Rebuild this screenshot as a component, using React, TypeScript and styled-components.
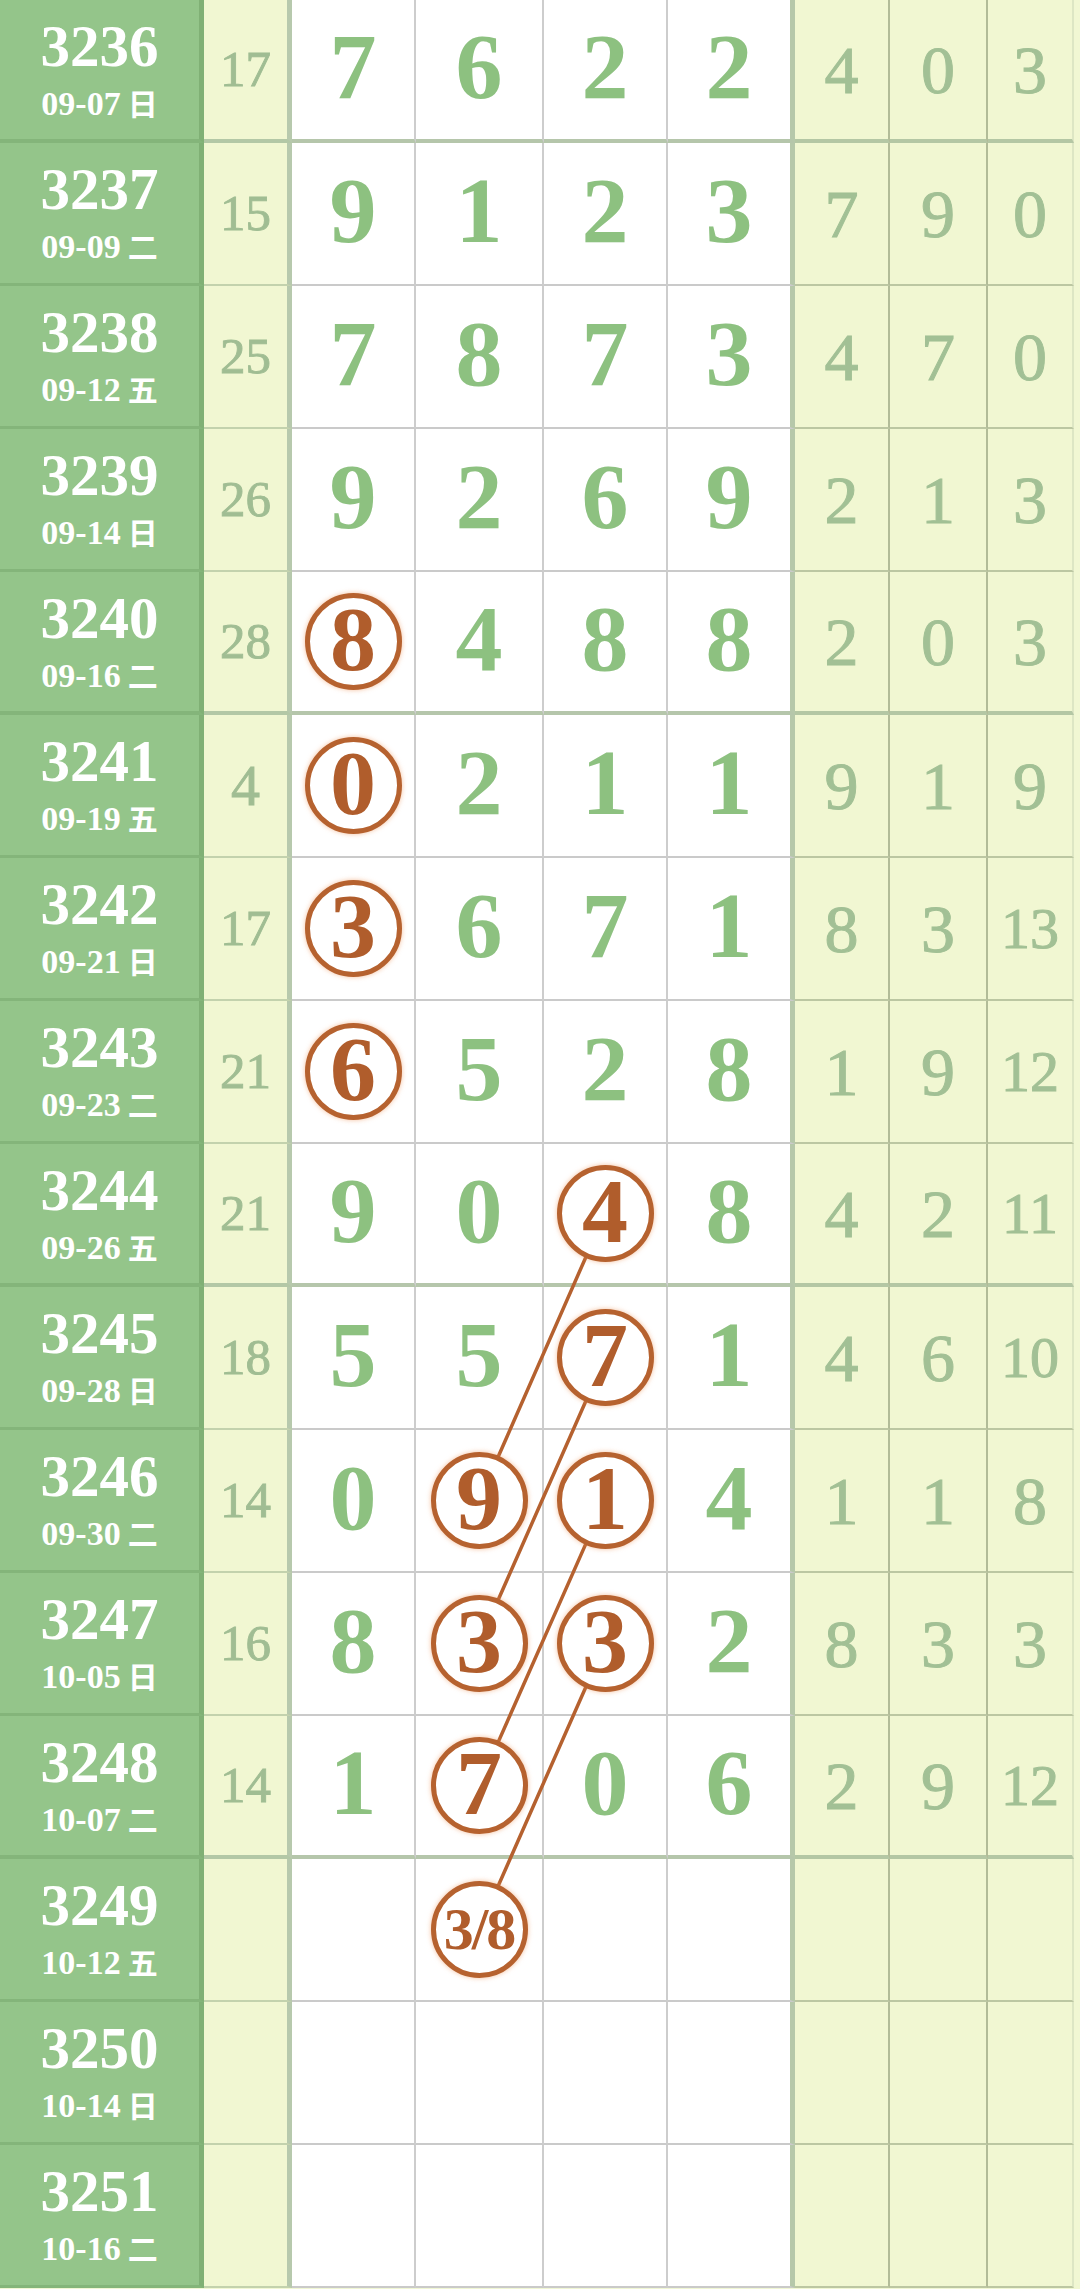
import styled, { createGlobalStyle } from 'styled-components'

type Draw = {
  issue: string
  date: string
  weekday: string
  sum?: number
  digits: string[]
  stats: number[]
  rings?: number[]
}

const ROW_H = 143
const DIGIT_START = [292, 416, 544, 668]
const DIGIT_W = [124, 128, 124, 127]
const RING_R = 48

const draws: Draw[] = [
  { issue: '3236', date: '09-07', weekday: '日', sum: 17, digits: ['7', '6', '2', '2'], stats: [4, 0, 3] },
  { issue: '3237', date: '09-09', weekday: '二', sum: 15, digits: ['9', '1', '2', '3'], stats: [7, 9, 0] },
  { issue: '3238', date: '09-12', weekday: '五', sum: 25, digits: ['7', '8', '7', '3'], stats: [4, 7, 0] },
  { issue: '3239', date: '09-14', weekday: '日', sum: 26, digits: ['9', '2', '6', '9'], stats: [2, 1, 3] },
  { issue: '3240', date: '09-16', weekday: '二', sum: 28, digits: ['8', '4', '8', '8'], stats: [2, 0, 3], rings: [0] },
  { issue: '3241', date: '09-19', weekday: '五', sum: 4, digits: ['0', '2', '1', '1'], stats: [9, 1, 9], rings: [0] },
  { issue: '3242', date: '09-21', weekday: '日', sum: 17, digits: ['3', '6', '7', '1'], stats: [8, 3, 13], rings: [0] },
  { issue: '3243', date: '09-23', weekday: '二', sum: 21, digits: ['6', '5', '2', '8'], stats: [1, 9, 12], rings: [0] },
  { issue: '3244', date: '09-26', weekday: '五', sum: 21, digits: ['9', '0', '4', '8'], stats: [4, 2, 11], rings: [2] },
  { issue: '3245', date: '09-28', weekday: '日', sum: 18, digits: ['5', '5', '7', '1'], stats: [4, 6, 10], rings: [2] },
  { issue: '3246', date: '09-30', weekday: '二', sum: 14, digits: ['0', '9', '1', '4'], stats: [1, 1, 8], rings: [1, 2] },
  { issue: '3247', date: '10-05', weekday: '日', sum: 16, digits: ['8', '3', '3', '2'], stats: [8, 3, 3], rings: [1, 2] },
  { issue: '3248', date: '10-07', weekday: '二', sum: 14, digits: ['1', '7', '0', '6'], stats: [2, 9, 12], rings: [1] },
  { issue: '3249', date: '10-12', weekday: '五', digits: ['', '3/8', '', ''], stats: [], rings: [1] },
  { issue: '3250', date: '10-14', weekday: '日', digits: ['', '', '', ''], stats: [] },
  { issue: '3251', date: '10-16', weekday: '二', digits: ['', '', '', ''], stats: [] },
]

// [row, col] -> [row, col]
const links: [number, number, number, number][] = [
  [8, 2, 10, 1],
  [9, 2, 11, 1],
  [10, 2, 12, 1],
  [11, 2, 13, 1],
]

const isGroupEnd = (i: number) => i % 4 === 0

const GlobalStyle = createGlobalStyle`
  html, body {
    margin: 0;
    padding: 0;
    background: #f1f7d3;
  }
  body {
    font-family: "Liberation Serif", "Noto Sans CJK SC", serif;
  }
`

const Table = styled.div`
  position: relative;
  width: 1080px;
`

const Row = styled.div`
  display: grid;
  grid-template-columns: 204px 88px 124px 128px 124px 127px 95px 98px 92px;
  height: ${ROW_H}px;
`

const IssueCell = styled.div<{ $end: boolean }>`
  box-sizing: border-box;
  display: flex;
  flex-direction: column;
  align-items: center;
  justify-content: center;
  gap: 11px;
  padding-bottom: 2px;
  background: #94c58a;
  border-right: 5px solid #80b075;
  border-bottom: ${({ $end }) => ($end ? '4px' : '3px')} solid #84b57a;
  color: #fff;
  font-weight: 700;
`

const IssueNo = styled.span`
  font-size: 59px;
  line-height: 1;
`

const IssueDate = styled.span`
  font-size: 34px;
  line-height: 1;
  white-space: nowrap;
`

const Weekday = styled.span`
  font-family: "Noto Sans CJK SC", sans-serif;
  font-size: 30px;
  font-weight: 700;
  margin-left: 7px;
`

const SumCell = styled.div<{ $end: boolean; $wide: boolean }>`
  box-sizing: border-box;
  display: flex;
  align-items: center;
  justify-content: center;
  background: #f1f7d2;
  border-right: 5px solid #b7c9ad;
  border-bottom: ${({ $end }) => ($end ? '4px solid #b3c8a6' : '2px solid #c3d2ad')};
  color: #a0bd93;
  -webkit-text-stroke: 0.9px #a0bd93;
  font-size: ${({ $wide }) => ($wide ? 51 : 58)}px;
  line-height: 1;
`

const DigitCell = styled.div<{ $end: boolean; $last: boolean }>`
  box-sizing: border-box;
  display: flex;
  align-items: center;
  justify-content: center;
  background: #fff;
  border-right: ${({ $last }) => ($last ? '5px solid #b6c8aa' : '2px solid #cdcdcd')};
  border-bottom: ${({ $end }) => ($end ? '4px solid #b5c6ab' : '2px solid #cacaca')};
`

const Digit = styled.span`
  color: #8dc180;
  font-size: 94px;
  font-weight: 700;
  line-height: 1;
  margin-bottom: 8px;
`

const Ring = styled.span<{ $small: boolean }>`
  position: relative;
  z-index: 2;
  box-sizing: border-box;
  width: 97px;
  height: 97px;
  display: flex;
  align-items: center;
  justify-content: center;
  padding-bottom: ${({ $small }) => ($small ? 2 : 6)}px;
  border: 5px solid #b6622f;
  border-radius: 50%;
  background: #fff;
  box-shadow: 0 0 5px rgba(238, 150, 92, 0.6);
  color: #b05d2c;
  font-size: ${({ $small }) => ($small ? 60 : 92)}px;
  font-weight: 700;
  line-height: 1;
  letter-spacing: ${({ $small }) => ($small ? '-2px' : '0')};
`

const StatCell = styled.div<{ $end: boolean; $wide: boolean; $edge: boolean }>`
  box-sizing: border-box;
  display: flex;
  align-items: center;
  justify-content: center;
  background: #f1f7d2;
  border-right: 2px solid ${({ $edge }) => ($edge ? '#dde6c4' : '#b2bc98')};
  border-bottom: ${({ $end }) => ($end ? '4px solid #b4c7a4' : '2px solid #bcc7a2')};
  color: #a2c095;
  -webkit-text-stroke: 1px #a2c095;
  font-size: ${({ $wide }) => ($wide ? 58 : 68)}px;
  line-height: 1;
  ${({ $edge }) => ($edge ? 'margin-right: 6px;' : '')}
`

const LinkLayer = styled.svg`
  position: absolute;
  top: 0;
  left: 0;
  z-index: 1;
  pointer-events: none;
`

const centerOf = (row: number, col: number) => {
  const bb = isGroupEnd(row) ? 4 : 2
  const br = col === 3 ? 5 : 2
  return {
    x: DIGIT_START[col] + (DIGIT_W[col] - br) / 2,
    y: row * ROW_H + (ROW_H - bb) / 2,
  }
}

const trimmed = ([r1, c1, r2, c2]: [number, number, number, number]) => {
  const a = centerOf(r1, c1)
  const b = centerOf(r2, c2)
  const dx = b.x - a.x
  const dy = b.y - a.y
  const len = Math.hypot(dx, dy)
  const ux = dx / len
  const uy = dy / len
  return {
    x1: a.x + ux * RING_R,
    y1: a.y + uy * RING_R,
    x2: b.x - ux * RING_R,
    y2: b.y - uy * RING_R,
  }
}

export default function App() {
  return (
    <>
      <GlobalStyle />
      <Table>
        {draws.map((d, i) => {
          const end = isGroupEnd(i)
          return (
            <Row key={d.issue}>
              <IssueCell $end={end}>
                <IssueNo>{d.issue}</IssueNo>
                <IssueDate>
                  {d.date}
                  <Weekday>{d.weekday}</Weekday>
                </IssueDate>
              </IssueCell>
              <SumCell $end={end} $wide={(d.sum ?? 0) >= 10}>
                {d.sum ?? ''}
              </SumCell>
              {d.digits.map((n, c) => (
                <DigitCell key={c} $end={end} $last={c === 3}>
                  {d.rings?.includes(c) ? (
                    <Ring $small={n.length > 1}>{n}</Ring>
                  ) : (
                    n && <Digit>{n}</Digit>
                  )}
                </DigitCell>
              ))}
              {[0, 1, 2].map(c => (
                <StatCell key={c} $end={end} $wide={(d.stats[c] ?? 0) >= 10} $edge={c === 2}>
                  {d.stats[c] ?? ''}
                </StatCell>
              ))}
            </Row>
          )
        })}
        <LinkLayer width={1080} height={draws.length * ROW_H} viewBox={`0 0 1080 ${draws.length * ROW_H}`}>
          {links.map((l, i) => {
            const p = trimmed(l)
            return (
              <line
                key={i}
                x1={p.x1}
                y1={p.y1}
                x2={p.x2}
                y2={p.y2}
                stroke="#b5612f"
                strokeWidth="3.5"
                strokeLinecap="round"
              />
            )
          })}
        </LinkLayer>
      </Table>
    </>
  )
}
